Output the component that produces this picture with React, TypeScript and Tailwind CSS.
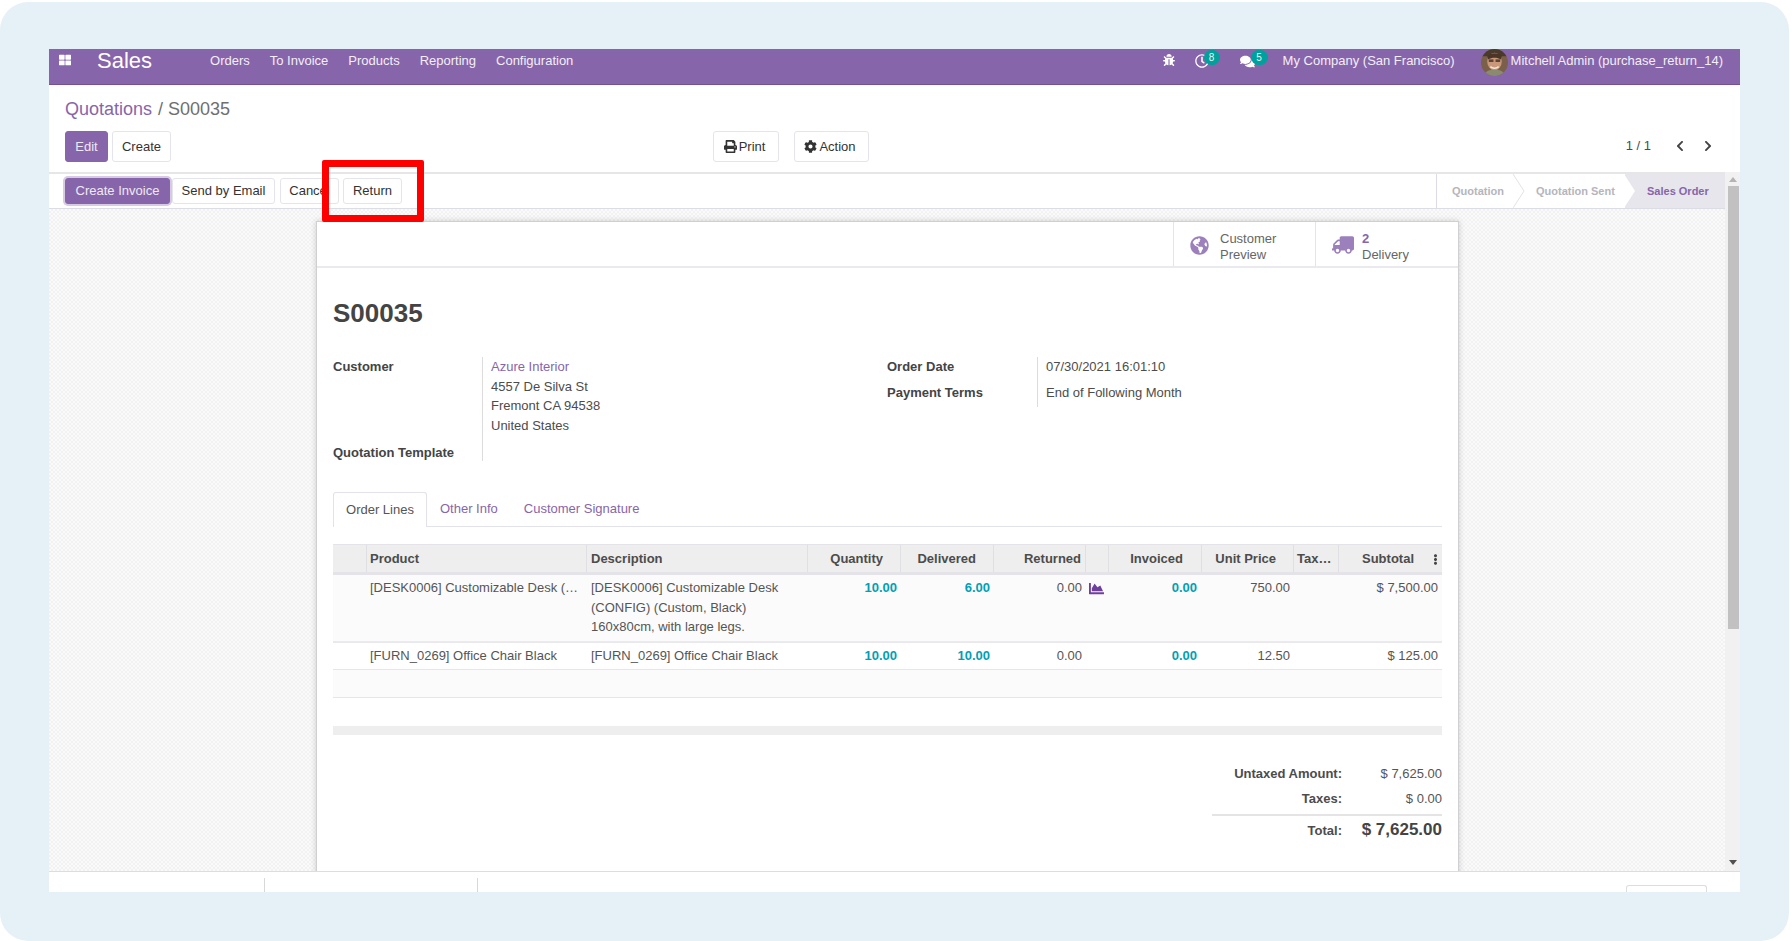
import { FaBug, FaChartArea, FaChevronLeft, FaChevronRight, FaCog, FaComments, FaEllipsisV, FaGlobeAmericas, FaPrint, FaRegClock, FaThLarge, FaTruck } from 'react-icons/fa'

const navItems = ['Orders', 'To Invoice', 'Products', 'Reporting', 'Configuration']

function Avatar() {
  return (
    <svg width="27" height="27" viewBox="0 0 26 26" className="rounded-full shrink-0">
      <rect width="26" height="26" fill="#7a6048" />
      <rect x="0" y="0" width="26" height="7" fill="#4a3a2c" />
      <ellipse cx="13" cy="12" rx="7" ry="8.5" fill="#c9977a" />
      <path d="M6 7c2-4 12-4 14 0l-1 3c-3-2-9-2-12 0z" fill="#4a3527" />
      <rect x="7.5" y="10" width="4.5" height="2.5" fill="#5c4436" />
      <rect x="14" y="10" width="4.5" height="2.5" fill="#5c4436" />
      <path d="M9 17c2 2 6 2 8 0" stroke="#f3e4d8" strokeWidth="1.5" fill="none" />
      <path d="M3 26c1-5 5-6 10-6s9 1 10 6z" fill="#8b8a70" />
    </svg>
  )
}

function Navbar() {
  return (
    <div className="flex h-[36px] shrink-0 items-start bg-[#8765aa] border-b border-[#74509a] text-[13px] text-[#f3eef7]">
      <FaThLarge className="ml-[10px] mt-[5px] text-[12px] text-white" />
      <span className="ml-[26px] mt-[-1px] text-[22px] leading-[26px] text-white">Sales</span>
      <div className="ml-[58px] flex gap-[20px] pt-[3px] leading-[18px]">
        {navItems.map((item) => (
          <span key={item}>{item}</span>
        ))}
      </div>
      <div className="ml-auto flex items-start pr-[17px]">
        <FaBug className="mt-[5px] text-[12px] text-white" />
        <div className="relative ml-[20px] mt-[5px]">
          <FaRegClock className="text-[14px] text-white" />
          <span className="absolute left-[9px] top-[-4px] flex h-[15px] w-[16px] items-center justify-center rounded-full bg-[#00a09d] text-[10px] text-[#e4f4f3]">8</span>
        </div>
        <div className="relative ml-[31px] mt-[5px]">
          <FaComments className="text-[15px] text-white" />
          <span className="absolute left-[11px] top-[-4px] flex h-[15px] w-[17px] items-center justify-center rounded-full bg-[#00a09d] text-[10px] text-[#e4f4f3]">5</span>
        </div>
        <span className="ml-[28px] pt-[3px] leading-[18px]">My Company (San Francisco)</span>
        <div className="ml-[26px] flex">
          <Avatar />
          <span className="ml-[3px] pt-[3px] leading-[18px]">Mitchell Admin (purchase_return_14)</span>
        </div>
      </div>
    </div>
  )
}

function Btn({ children, primary, className }: { children: React.ReactNode; primary?: boolean; className?: string }) {
  return (
    <button
      className={
        primary
          ? `flex items-center justify-center rounded-[3px] border border-[#8765aa] bg-[#8765aa] text-[13px] text-[#efe9f5] ${className ?? ''}`
          : `flex items-center justify-center rounded-[3px] border border-[#e4e4ec] bg-white text-[13px] text-[#333333] ${className ?? ''}`
      }
    >
      {children}
    </button>
  )
}

function ControlPanel() {
  return (
    <div className="h-[87px] shrink-0 pl-[16px]">
      <div className="flex h-[46px] items-end pb-[10px] text-[18px] leading-[24px] text-[#6f6f6f]">
        <span className="text-[#8765aa]">Quotations</span>
        <span className="ml-[6px]">/ S00035</span>
      </div>
      <div className="flex h-[31px] items-stretch">
        <Btn primary className="w-[43px]">Edit</Btn>
        <Btn className="ml-[4px] w-[59px]">Create</Btn>
        <Btn className="ml-[542px] w-[66px] gap-[2px] pr-[3px]"><FaPrint className="text-[13px] text-[#333333]" />Print</Btn>
        <Btn className="ml-[15px] w-[75px] gap-[2px] pr-[3px]"><FaCog className="text-[13px] text-[#333333]" />Action</Btn>
        <div className="ml-auto flex items-center pr-[26px] pb-[1px] text-[13px] text-[#4c4c4c]">
          <span>1 / 1</span>
          <FaChevronLeft className="ml-[23px] text-[12px] text-[#444444]" />
          <FaChevronRight className="ml-[16px] text-[12px] text-[#444444]" />
        </div>
      </div>
    </div>
  )
}

function StatusBar() {
  return (
    <div className="flex h-[37px] shrink-0 items-stretch border-t-2 border-b border-t-[#e6e6e6] border-b-[#dcdce4] pl-[16px]">
      <div className="flex items-center">
        <div className="flex h-[26px] w-[105px] items-center justify-center rounded-[3px] border border-[#8765aa] bg-[#8765aa] text-[13px] text-[#efe9f5] shadow-[0_0_0_2px_#d6cbe2]">Create Invoice</div>
        <Btn className="ml-[2px] h-[26px] w-[103px]">Send by Email</Btn>
        <Btn className="ml-[5px] h-[26px] w-[59px]">Cancel</Btn>
        <Btn className="ml-[4px] h-[26px] w-[59px]">Return</Btn>
      </div>
      <div className="ml-auto flex w-[289px] border-l border-[#dcdce4] text-[11px] font-bold">
        <div className="relative flex w-[87px] items-center pl-[15px] text-[#b5b5bd]">
          Quotation
          <svg className="absolute right-[-1px] top-0" width="12" height="34" viewBox="0 0 12 34"><path d="M0 0 L11 17 L0 34" fill="none" stroke="#e2e2e8" /></svg>
        </div>
        <div className="relative flex w-[101px] items-center pl-[12px] text-[#b5b5bd]">
          Quotation Sent
          <svg className="absolute right-[-11px] top-0 z-10" width="12" height="34" viewBox="0 0 12 34"><path d="M0 0 L11 17 L0 34 Z" fill="#ffffff" /></svg>
        </div>
        <div className="flex flex-1 items-center bg-[#e6e6ec] pl-[22px] text-[#8765aa]">Sales Order</div>
      </div>
    </div>
  )
}

function ButtonBox() {
  return (
    <div className="flex h-[46px] justify-end border-b-2 border-[#e9e9ee] text-[13px] leading-[16px] text-[#666666]">
      <div className="flex w-[142px] items-center border-l border-[#e4e4ea] pl-[16px] pt-[2px]">
        <FaGlobeAmericas className="text-[19px] text-[#9c80bb]" />
        <div className="ml-[11px] pt-[3px]">Customer<br />Preview</div>
      </div>
      <div className="flex w-[143px] items-center border-l border-[#e4e4ea] pl-[16px] pt-[2px]">
        <FaTruck className="-scale-x-100 text-[22px] text-[#9c80bb]" />
        <div className="ml-[8px] pt-[3px]"><span className="font-bold text-[#8765aa]">2</span><br />Delivery</div>
      </div>
    </div>
  )
}

function OrderHeader() {
  return (
    <>
      <h1 className="pt-[29px] text-[26px] font-bold leading-[32px] text-[#444444]">S00035</h1>
      <div className="mt-[28px] flex h-[104px] text-[13px] leading-[19.5px] text-[#4c4c4c]">
        <div className="flex w-[554px]">
          <div className="w-[150px] border-r border-[#dcdcdc]">
            <div className="font-bold text-[#444444]">Customer</div>
            <div className="pt-[66px] font-bold text-[#444444]">Quotation Template</div>
          </div>
          <div className="pl-[8px]">
            <div className="text-[#8765aa]">Azure Interior</div>
            <div>4557 De Silva St</div>
            <div>Fremont CA 94538</div>
            <div>United States</div>
          </div>
        </div>
        <div className="flex h-[50px]">
          <div className="w-[151px] border-r border-[#dcdcdc] font-bold text-[#444444]">
            <div>Order Date</div>
            <div className="pt-[6px]">Payment Terms</div>
          </div>
          <div className="pl-[8px]">
            <div>07/30/2021 16:01:10</div>
            <div className="pt-[6px]">End of Following Month</div>
          </div>
        </div>
      </div>
    </>
  )
}

function Tabs() {
  return (
    <div className="mt-[31px] flex h-[35px] border-b border-[#e2e2ea] text-[13px] text-[#8765aa]">
      <div className="mb-[-1px] flex w-[94px] items-center justify-center rounded-t-[3px] border border-b-0 border-[#e2e2ea] bg-white text-[#555555]">Order Lines</div>
      <div className="ml-[13px] flex items-center">Other Info</div>
      <div className="ml-[26px] flex items-center">Customer Signature</div>
    </div>
  )
}

const headCell = 'flex h-full items-center border-r border-[#dfdfe4] px-[3px]'
const numBold = 'font-bold text-[#00a0b4]'

function OrderTable() {
  return (
    <div className="mt-[17px] text-[13px] text-[#555555]">
      <div className="grid h-[31px] grid-cols-[34px_220px_221px_93px_93px_92px_23px_93px_92px_45px_1fr] border-b-[3px] border-t border-b-[#e3e3e8] border-t-[#e4e4e8] bg-[#eeeeee] font-bold text-[#4c4c4c]">
        <div className={headCell} />
        <div className={headCell}>Product</div>
        <div className={`${headCell} pl-[4px]`}>Description</div>
        <div className={`${headCell} justify-end pr-[17px]`}>Quantity</div>
        <div className={`${headCell} justify-end pr-[17px]`}>Delivered</div>
        <div className={`${headCell} justify-end pr-[4px]`}>Returned</div>
        <div className={headCell} />
        <div className={`${headCell} justify-end pr-[18px]`}>Invoiced</div>
        <div className={`${headCell} justify-end pr-[17px]`}>Unit Price</div>
        <div className={headCell}>Tax…</div>
        <div className="relative flex h-full items-center justify-end pr-[28px]">
          Subtotal
          <FaEllipsisV className="absolute right-[1px] top-[9px] text-[11px] text-[#444444]" />
        </div>
      </div>
      <Row
        className="h-[68px] border-b-2 border-[#e9e9ee] bg-[#fbfbfb]"
        product="[DESK0006] Customizable Desk (…"
        description={<>[DESK0006] Customizable Desk<br />(CONFIG) (Custom, Black)<br />160x80cm, with large legs.</>}
        qty="10.00"
        delivered="6.00"
        price="750.00"
        subtotal="$ 7,500.00"
        chart
      />
      <Row
        className="h-[27px] border-b border-[#e6e6ea] bg-white"
        product="[FURN_0269] Office Chair Black"
        description="[FURN_0269] Office Chair Black"
        qty="10.00"
        delivered="10.00"
        price="12.50"
        subtotal="$ 125.00"
      />
      <div className="h-[28px] border-b border-[#e6e6ea] bg-[#fbfbfb]" />
      <div className="h-[28px] bg-white" />
      <div className="h-[9px] bg-[#eeeeee]" />
    </div>
  )
}

function Row({ className, product, description, qty, delivered, price, subtotal, chart }: {
  className: string
  product: string
  description: React.ReactNode
  qty: string
  delivered: string
  price: string
  subtotal: string
  chart?: boolean
}) {
  return (
    <div className={`grid grid-cols-[34px_220px_221px_93px_93px_92px_23px_93px_92px_45px_1fr] leading-[19.5px] pt-[3px] ${className}`}>
      <div />
      <div className="whitespace-nowrap pl-[3px]">{product}</div>
      <div className="pl-[4px]">{description}</div>
      <div className={`pr-[4px] text-right ${numBold}`}>{qty}</div>
      <div className={`pr-[4px] text-right ${numBold}`}>{delivered}</div>
      <div className="pr-[4px] text-right">0.00</div>
      <div className="pl-[3px] pt-[3px]">{chart && <FaChartArea className="text-[15px] text-[#6f3f9e]" />}</div>
      <div className={`pr-[5px] text-right ${numBold}`}>0.00</div>
      <div className="pr-[4px] text-right">{price}</div>
      <div />
      <div className="pr-[4px] text-right">{subtotal}</div>
    </div>
  )
}

function Totals() {
  return (
    <div className="ml-auto mt-[29px] w-[230px] text-[13px] leading-[20px] text-[#555555]">
      <div className="flex">
        <span className="w-[130px] text-right font-bold text-[#4c4c4c]">Untaxed Amount:</span>
        <span className="flex-1 text-right">$ 7,625.00</span>
      </div>
      <div className="mt-[5px] flex">
        <span className="w-[130px] text-right font-bold text-[#4c4c4c]">Taxes:</span>
        <span className="flex-1 text-right">$ 0.00</span>
      </div>
      <div className="mt-[5px] h-[2px] bg-[#e4e4e4]" />
      <div className="mt-[2px] flex items-center">
        <span className="w-[130px] pt-[2px] text-right font-bold text-[#4c4c4c]">Total:</span>
        <span className="flex-1 text-right text-[17px] font-bold leading-[24px] text-[#444444]">$ 7,625.00</span>
      </div>
    </div>
  )
}

function Scrollbar() {
  return (
    <div className="flex w-[15px] shrink-0 flex-col items-center border-b border-[#dcdce4] bg-[#f1f1f1] pl-[1px]">
      <div className="mt-[5px] h-0 w-0 border-x-[4px] border-b-[5px] border-x-transparent border-b-[#b4b4b4]" />
      <div className="mt-[4px] h-[443px] w-[11px] bg-[#c1c1c1]" />
      <div className="mt-auto mb-[6px] h-0 w-0 border-x-[4px] border-t-[5px] border-x-transparent border-t-[#505050]" />
    </div>
  )
}

export default function App() {
  return (
    <div className="h-[941px] w-[1792px] overflow-hidden bg-white pt-[2px] pr-[3px] font-['Liberation_Sans',Arial,sans-serif]">
      <div className="h-[939px] rounded-[28px] bg-[#e6f1f7] pl-[49px] pr-[49px] pt-[47px]">
        <div className="relative flex h-[843px] w-[1691px] flex-col overflow-hidden bg-white">
          <Navbar />
          <ControlPanel />
          <div className="flex h-[700px] shrink-0">
            <div className="flex min-w-0 flex-1 flex-col">
              <StatusBar />
              <div className="h-[663px] overflow-hidden border-b border-[#dcdce4] bg-[#f6f6f6] bg-[repeating-conic-gradient(#f2f2f2_0%_25%,#fafafa_0%_50%)] bg-[length:4px_4px] pl-[267px] pt-[12px]">
                <div className="h-[700px] w-[1143px] border border-[#cfcfd4] bg-white shadow-[0_0_6px_rgba(0,0,0,0.18)]">
                  <ButtonBox />
                  <div className="px-[16px]">
                    <OrderHeader />
                    <Tabs />
                    <OrderTable />
                    <Totals />
                  </div>
                </div>
              </div>
            </div>
            <Scrollbar />
          </div>
          <div className="relative flex h-[20px] shrink-0 items-end">
            <div className="ml-[215px] h-[14px] w-px bg-[#d8d8d8]" />
            <div className="ml-[212px] h-[14px] w-px bg-[#d8d8d8]" />
            <div className="ml-[1148px] h-[7px] w-[81px] rounded-t-[3px] border border-b-0 border-[#dcdce2]" />
          </div>
          <div className="absolute left-[273px] top-[111px] h-[62px] w-[102px] rounded-[2px] border-[7px] border-[#ff0000]" />
        </div>
      </div>
    </div>
  )
}
